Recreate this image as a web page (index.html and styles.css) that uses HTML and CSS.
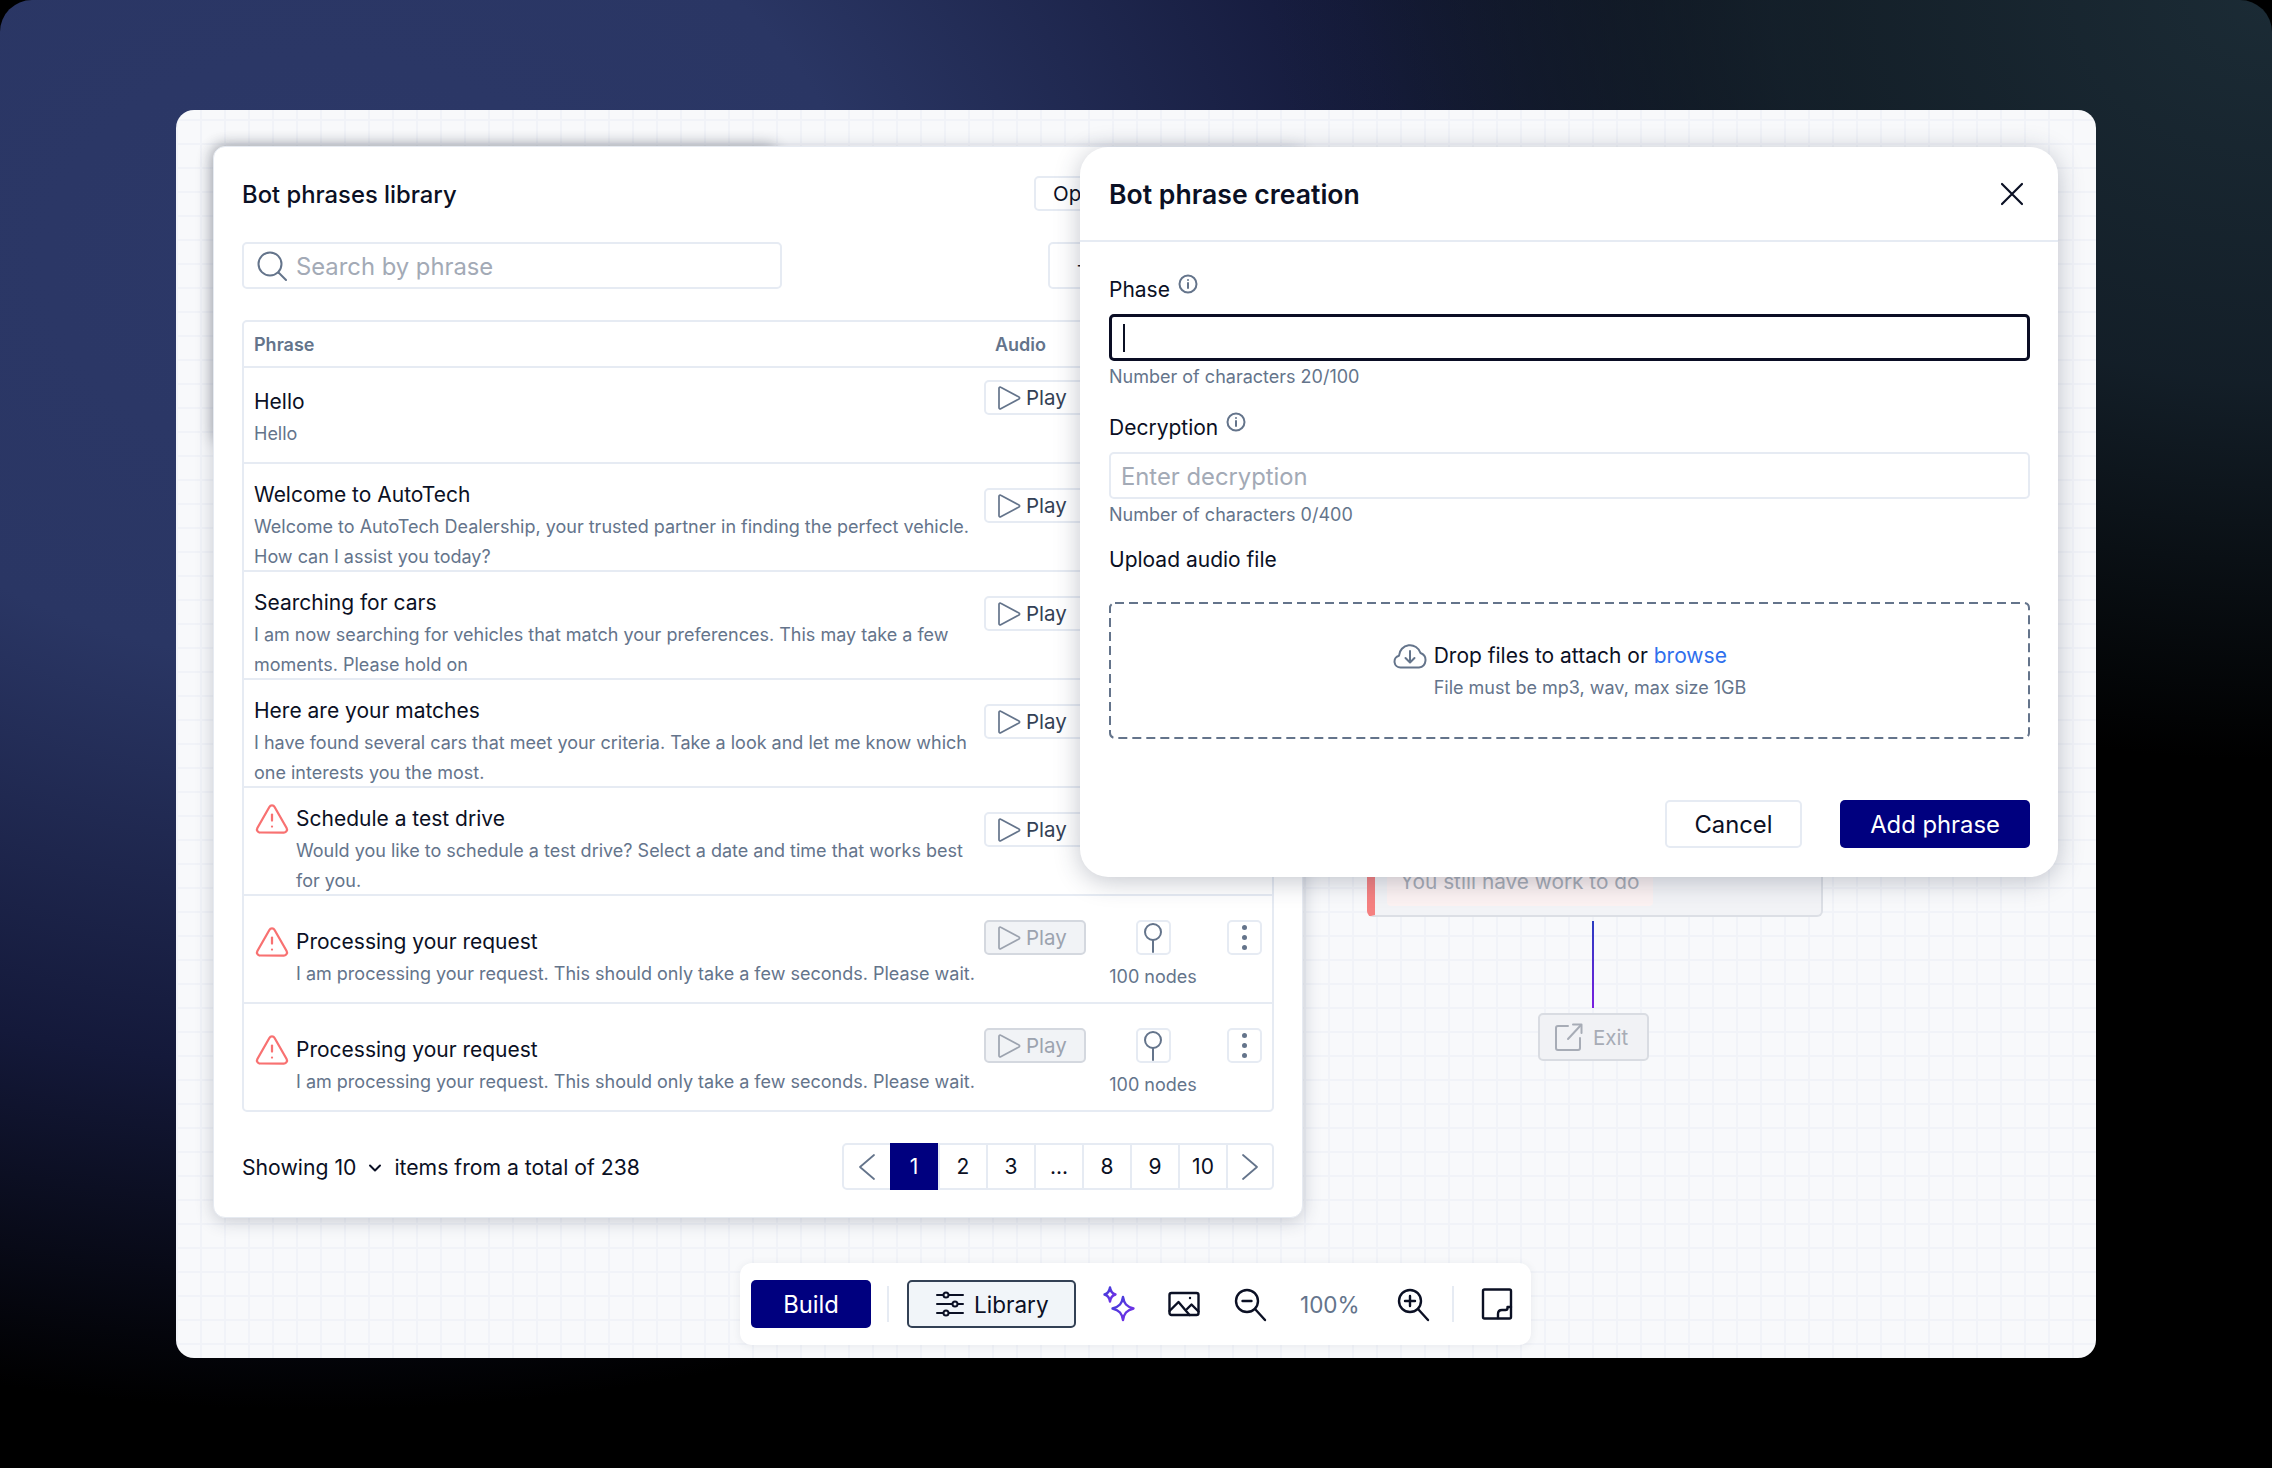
FILE: index.html
```html
<!DOCTYPE html>
<html>
<head>
<title>Bot phrases library</title>
<link rel="stylesheet" href="styles.css">
</head>
<body>
<svg class="sprite" width="0" height="0">
  <defs>
    <symbol id="ic-play" viewBox="0 0 26 26"><path d="M3 3.2v19.6c0 .9 1 1.4 1.700 1L23 14c.8-.4.8-1.600 0-2L4.700 2.200C4 1.800 3 2.300 3 3.200z"/></symbol>
    <symbol id="ic-warn" viewBox="0 0 24 24"><path d="m21.730 18-8-14a2 2 0 0 0-3.480 0l-8 14A2 2 0 0 0 4 21h16a2 2 0 0 0 1.730-3"/><path d="M12 9v4"/><path d="M12 17h.01"/></symbol>
    <symbol id="ic-pin" viewBox="0 0 24 32"><circle cx="12" cy="10" r="8"/><path d="M12 18v12"/></symbol>
    <symbol id="ic-info" viewBox="0 0 20 20"><circle cx="10" cy="10" r="8.500"/><path d="M10 9v5"/><path d="M10 6h.01"/></symbol>
    <linearGradient id="spark" x1="0" y1="0" x2="1" y2="1"><stop offset="0" stop-color="#3b3fd8"/><stop offset="1" stop-color="#7c2ee8"/></linearGradient>
  </defs>
</svg>

<div class="backdrop">
  <div class="canvas">

    <!-- diagram nodes behind the windows -->
    <div class="node-card"><div class="node-note">You still have work to do</div></div>
    <div class="node-line"></div>
    <div class="node-exit">
      <svg class="icon" width="30" height="30" viewBox="0 0 30 30"><path d="M14 4H4a2 2 0 0 0-2 2v20a2 2 0 0 0 2 2h20a2 2 0 0 0 2-2V16"/><path d="M14 17 27 3"/><path d="M19 2.500h8.500V11"/></svg>
      <span>Exit</span>
    </div>

    <div class="panel-shade"></div>
    <section class="panel">
      <div class="panel-head">
        <h2 class="panel-title">Bot phrases library</h2>
        <button class="btn-open">Open</button>
      </div>
      <div class="panel-tools">
        <label class="search">
          <svg class="icon" width="30" height="30" viewBox="0 0 30 30"><circle cx="13" cy="13" r="11.500"/><path d="m21.500 21.500 7.500 7.500"/></svg>
          <input type="text" placeholder="Search by phrase">
        </label>
        <button class="btn-add">+ Add</button>
      </div>

      <div class="table">
        <div class="table-head">
          <span class="col-phrase">Phrase</span>
          <span class="col-audio">Audio</span>
        </div>

        <div class="row row-first">
          <div class="phrase">
            <div class="phrase-title">Hello</div>
            <div class="phrase-text">Hello</div>
          </div>
          <button class="btn-play"><svg class="icon" width="26" height="26"><use href="#ic-play"/></svg>Play</button>
        </div>

        <div class="row">
          <div class="phrase">
            <div class="phrase-title">Welcome to AutoTech</div>
            <div class="phrase-text">Welcome to AutoTech Dealership, your trusted partner in finding the perfect vehicle. How can I assist you today?</div>
          </div>
          <button class="btn-play"><svg class="icon" width="26" height="26"><use href="#ic-play"/></svg>Play</button>
        </div>

        <div class="row">
          <div class="phrase">
            <div class="phrase-title">Searching for cars</div>
            <div class="phrase-text">I am now searching for vehicles that match your preferences. This may take a few moments. Please hold on</div>
          </div>
          <button class="btn-play"><svg class="icon" width="26" height="26"><use href="#ic-play"/></svg>Play</button>
        </div>

        <div class="row">
          <div class="phrase">
            <div class="phrase-title">Here are your matches</div>
            <div class="phrase-text">I have found several cars that meet your criteria. Take a look and let me know which one interests you the most.</div>
          </div>
          <button class="btn-play"><svg class="icon" width="26" height="26"><use href="#ic-play"/></svg>Play</button>
        </div>

        <div class="row">
          <div class="phrase phrase-warn">
            <svg class="icon warn" width="36" height="36"><use href="#ic-warn"/></svg>
            <div>
              <div class="phrase-title">Schedule a test drive</div>
              <div class="phrase-text">Would you like to schedule a test drive? Select a date and time that works best for you.</div>
            </div>
          </div>
          <button class="btn-play"><svg class="icon" width="26" height="26"><use href="#ic-play"/></svg>Play</button>
        </div>

        <div class="row row-mid">
          <div class="phrase phrase-warn">
            <svg class="icon warn" width="36" height="36"><use href="#ic-warn"/></svg>
            <div>
              <div class="phrase-title">Processing your request</div>
              <div class="phrase-text">I am processing your request. This should only take a few seconds. Please wait.</div>
            </div>
          </div>
          <button class="btn-play is-off"><svg class="icon" width="26" height="26"><use href="#ic-play"/></svg>Play</button>
          <div class="nodes">
            <button class="btn-square"><svg class="icon" width="24" height="32"><use href="#ic-pin"/></svg></button>
            <span>100 nodes</span>
          </div>
          <button class="btn-square btn-more"><i></i><i></i><i></i></button>
        </div>

        <div class="row row-mid">
          <div class="phrase phrase-warn">
            <svg class="icon warn" width="36" height="36"><use href="#ic-warn"/></svg>
            <div>
              <div class="phrase-title">Processing your request</div>
              <div class="phrase-text">I am processing your request. This should only take a few seconds. Please wait.</div>
            </div>
          </div>
          <button class="btn-play is-off"><svg class="icon" width="26" height="26"><use href="#ic-play"/></svg>Play</button>
          <div class="nodes">
            <button class="btn-square"><svg class="icon" width="24" height="32"><use href="#ic-pin"/></svg></button>
            <span>100 nodes</span>
          </div>
          <button class="btn-square btn-more"><i></i><i></i><i></i></button>
        </div>
      </div>

      <div class="panel-foot">
        <div class="showing">
          <span>Showing 10</span>
          <svg class="icon caret" width="14" height="10" viewBox="0 0 14 10"><path d="m2 2.500 5 5 5-5"/></svg>
          <span>items from a total of 238</span>
        </div>
        <div class="pager">
          <a class="page-prev"><svg class="icon" width="18" height="28" viewBox="0 0 18 28"><path d="M16 2 2 14l14 12"/></svg></a>
          <a class="is-active">1</a><a>2</a><a>3</a><a>...</a><a>8</a><a>9</a><a>10</a>
          <a class="page-next"><svg class="icon" width="18" height="28" viewBox="0 0 18 28"><path d="m2 2 14 12L2 26"/></svg></a>
        </div>
      </div>
    </section>

    <section class="modal">
      <div class="modal-head">
        <h2 class="modal-title">Bot phrase creation</h2>
        <svg class="icon close" width="24" height="24" viewBox="0 0 24 24"><path d="M2 2l20 20M22 2 2 22"/></svg>
      </div>
      <div class="modal-body">
        <div class="field-label">Phase <svg class="icon info" width="20" height="20"><use href="#ic-info"/></svg></div>
        <div class="text-input is-focus"><span class="cursor"></span></div>
        <div class="field-help">Number of characters 20/100</div>

        <div class="field-label field-gap">Decryption <svg class="icon info" width="20" height="20"><use href="#ic-info"/></svg></div>
        <input class="text-input" type="text" placeholder="Enter decryption">
        <div class="field-help">Number of characters 0/400</div>

        <div class="field-label upload-label">Upload audio file</div>
        <div class="dropzone">
          <svg class="icon drop-icon" width="34" height="28" viewBox="0 0 34 28"><path d="M9 26.500H7.500A6 6 0 0 1 6 14.700 11 11 0 0 1 27.500 12 7.500 7.500 0 0 1 26 26.500z"/><path d="M17 10v11"/><path d="m12.500 17 4.500 4.500 4.500-4.500"/></svg>
          <div>
            <div class="drop-main">Drop files to attach or <a>browse</a></div>
            <div class="drop-sub">File must be mp3, wav, max size 1GB</div>
          </div>
        </div>
        <div class="modal-actions">
          <button class="btn-cancel">Cancel</button>
          <button class="btn-primary btn-addphrase">Add phrase</button>
        </div>
      </div>
    </section>

    <div class="toolbar">
      <button class="btn-primary btn-build">Build</button>
      <span class="tool-sep sep-a"></span>
      <button class="btn-library">
        <svg class="icon" width="28" height="26" viewBox="0 0 28 26"><path d="M1 4h6M13 4h14M1 13h15M22 13h5M1 22h6M13 22h14"/><circle cx="10" cy="4" r="2.500"/><circle cx="19" cy="13" r="2.500"/><circle cx="10" cy="22" r="2.500"/></svg>
        Library
      </button>
      <svg class="tool tool-spark" width="36" height="36" viewBox="0 0 36 36" fill="none" stroke="url(#spark)" stroke-width="2.400" stroke-linejoin="round"><path d="M9 1.500c.6 4 2 6 5.500 7-3.500 1-4.900 3-5.500 7-.6-4-2-6-5.500-7 3.500-1 4.900-3 5.500-7z"/><path d="M22 11c1 6.500 3.500 9.500 10.500 11.500-7 2-9.500 5-10.500 11.500-1-6.500-3.500-9.500-10.500-11.500 7-2 9.500-5 10.500-11.500z"/></svg>
      <svg class="icon tool tool-image" width="36" height="36" viewBox="0 0 36 36"><rect x="3.500" y="7" width="29" height="22" rx="2"/><path d="m3.500 25 9-9 11 13"/><path d="m21 23 4.500-4.500 7 7"/><path d="M24 12h.01"/></svg>
      <svg class="icon tool tool-out" width="36" height="36" viewBox="0 0 36 36"><circle cx="15" cy="15" r="11"/><path d="m23 23 10 11"/><path d="M10.500 15h9"/></svg>
      <span class="zoom-value">100%</span>
      <svg class="icon tool tool-in" width="36" height="36" viewBox="0 0 36 36"><circle cx="15" cy="15" r="11"/><path d="m23 23 10 11"/><path d="M10 15h10M15 10v10"/></svg>
      <span class="tool-sep sep-b"></span>
      <svg class="icon tool tool-note" width="36" height="36" viewBox="0 0 36 36"><rect x="4" y="3.500" width="28" height="29" rx="1.500"/><path d="M19 32v-4c0-2.500 1.500-4 4-4h3.500c1.500 0 2-.7 2-2v-1h3.500"/></svg>
    </div>

  </div>
</div>
</body>
</html>
```

FILE: styles.css
```css
* {
  box-sizing: border-box;
}

html, body {
  margin: 0;
  height: 100%;
  background: #000;
}

body {
  font-family: "Inter", "Liberation Sans", sans-serif;
  color: #0b1024;
  overflow: hidden;
}

button, input {
  font: inherit;
  color: inherit;
}

.sprite {
  position: absolute;
}

.icon {
  fill: none;
  stroke: #64748b;
  stroke-width: 2;
  stroke-linecap: round;
  stroke-linejoin: round;
  flex: none;
  display: block;
}

.backdrop {
  width: 2272px;
  height: 1468px;
  padding: 110px 176px 110px;
  border-radius: 32px;
  background:
    radial-gradient(ellipse 1000px 760px at 2272px 0, #1b2b35 0%, rgba(24, 38, 50, .8) 50%, rgba(20, 30, 44, 0) 100%),
    radial-gradient(ellipse 1550px 1150px at 320px 260px, #2c3868 0%, #2a3664 35%, #14193a 70%, rgba(6, 6, 20, 0) 100%),
    #000;
}

.canvas {
  position: relative;
  height: 1248px;
  border-radius: 18px;
  overflow: hidden;
  background-color: #f8f9fb;
  background-image:
    linear-gradient(#f1f3f8 2px, transparent 2px),
    linear-gradient(90deg, #f1f3f8 2px, transparent 2px);
  background-size: 24px 24px;
  background-position: 0 9px;
}

/* diagram behind */
.node-card {
  position: absolute;
  left: 1191px;
  top: 640px;
  width: 456px;
  height: 167px;
  padding: 107px 0 0 12px;
  background: #f2f3f6;
  border: 2px solid #dcdfe5;
  border-left: 8px solid #f58080;
  border-radius: 6px;
}

.node-note {
  width: 266px;
  height: 47px;
  padding: 10px 0 0 13px;
  font-size: 20.800px;
  line-height: 26px;
  color: #a7acb6;
  background: #fcf2f2;
  border-radius: 4px;
}

.node-line {
  position: absolute;
  left: 1416px;
  top: 811px;
  width: 2px;
  height: 87px;
  background: linear-gradient(#2a3cc0, #7a1fe0);
}

.node-exit {
  position: absolute;
  left: 1362px;
  top: 903px;
  width: 111px;
  height: 48px;
  display: flex;
  align-items: center;
  gap: 9px;
  padding-left: 14px;
  font-size: 20.500px;
  color: #a7acb6;
  background: #f1f2f5;
  border: 2px solid #d9dce2;
  border-radius: 5px;
}

.node-exit .icon {
  stroke: #a7acb6;
}

/* library window */
.panel-shade {
  position: absolute;
  left: 38px;
  top: 38px;
  width: 566px;
  height: 300px;
  border-radius: 12px;
  box-shadow: -2px -4px 14px rgba(30, 35, 50, .3);
}

.panel {
  position: absolute;
  left: 37px;
  top: 36px;
  width: 1090px;
  height: 1072px;
  padding: 29px 28px 0;
  background: #fff;
  border: 1px solid #e6eaf1;
  border-radius: 12px;
  box-shadow: 0 3px 18px rgba(40, 50, 75, .24);
}

.panel-head {
  display: flex;
  justify-content: space-between;
  height: 35px;
  margin-bottom: 31px;
}

.panel-title {
  margin: 0;
  font-size: 23.800px;
  font-weight: 500;
  line-height: 38px;
}

.btn-open {
  width: 120px;
  height: 35px;
  margin-right: 120px;
  padding: 0 0 0 17px;
  text-align: left;
  font-size: 20.500px;
  background: #fff;
  border: 2px solid #e6ebf3;
  border-radius: 5px;
}

.panel-tools {
  display: flex;
  justify-content: space-between;
  height: 47px;
  margin-bottom: 31px;
}

.search {
  width: 540px;
  height: 47px;
  display: flex;
  align-items: center;
  gap: 9px;
  padding-left: 13px;
  border: 2px solid #e6ebf3;
  border-radius: 5px;
}

.search input {
  flex: 1;
  min-width: 0;
  border: 0;
  outline: 0;
  padding: 2px 0 0;
  font-size: 23.800px;
  background: transparent;
}

.search input::placeholder, .text-input::placeholder {
  color: #a3aab6;
  opacity: 1;
}

.btn-add {
  width: 140px;
  height: 47px;
  margin-right: 86px;
  padding: 0 0 0 26px;
  text-align: left;
  font-size: 20px;
  background: #fff;
  border: 2px solid #e6ebf3;
  border-radius: 5px;
}

/* table */
.table {
  border: 2px solid #e6ebf3;
  border-radius: 5px;
}

.table-head {
  height: 44px;
  display: flex;
  align-items: center;
  padding-left: 10px;
  font-size: 18px;
  font-weight: 600;
  color: #64748b;
}

.col-phrase {
  width: 741px;
}

.row {
  display: grid;
  grid-template-columns: 730px 102px 134px 35px;
  height: 108px;
  padding: 0 0 0 10px;
  border-top: 2px solid #e6ebf3;
  align-items: start;
}

.row-first {
  height: 96px;
}

.phrase {
  padding-top: 17px;
  padding-right: 4px;
}

.row-first .phrase {
  padding-top: 20px;
}

.row-mid .phrase {
  padding-top: 32px;
}

.phrase-warn {
  display: flex;
  gap: 6px;
}

.warn {
  margin-top: -4px;
  stroke: #f87171;
  stroke-width: 1.500;
}

.phrase-title {
  font-size: 21px;
  line-height: 28px;
  margin-bottom: 3px;
}

.phrase-text {
  font-size: 18px;
  line-height: 30px;
  color: #64748b;
}

.btn-play {
  width: 102px;
  height: 35px;
  margin-top: 24px;
  display: flex;
  align-items: center;
  gap: 4px;
  padding: 0 0 0 10px;
  font-size: 20.500px;
  color: #334155;
  background: #fff;
  border: 2px solid #e6ebf3;
  border-radius: 5px;
}

.row-first .btn-play {
  margin-top: 12px;
}

.btn-play .icon {
  stroke-width: 1.700;
}

.btn-play.is-off {
  color: #9ca3af;
  background: #f1f3f6;
  border-color: #d4d8df;
}

.btn-play.is-off .icon {
  stroke: #9ca3af;
}

.btn-square {
  width: 35px;
  height: 35px;
  padding: 0;
  display: flex;
  align-items: center;
  justify-content: center;
  background: #fff;
  border: 2px solid #e6ebf3;
  border-radius: 5px;
}

.nodes {
  margin-top: 24px;
  display: flex;
  flex-direction: column;
  align-items: center;
  gap: 7px;
  font-size: 18px;
  line-height: 30px;
  color: #64748b;
}

.btn-more {
  margin-top: 24px;
  margin-left: 7px;
  flex-direction: column;
  gap: 5px;
}

.btn-more i {
  width: 5px;
  height: 5px;
  border-radius: 50%;
  background: #64748b;
}

/* footer */
.panel-foot {
  display: flex;
  justify-content: space-between;
  align-items: center;
  margin-top: 31px;
  font-size: 21px;
}

.showing {
  display: flex;
  align-items: center;
  font-size: 21.200px;
}

.caret {
  margin: 2px 12px 0 12px;
  stroke: #0b1024;
}

.pager {
  display: grid;
  grid-template-columns: 46px repeat(7, 1fr) 46px;
  width: 432px;
  height: 47px;
  border: 2px solid #e6ebf3;
  border-radius: 5px;
}

.pager a {
  display: flex;
  align-items: center;
  justify-content: center;
  border-left: 2px solid #e6ebf3;
}

.pager a:first-child {
  border-left: 0;
}

.pager .is-active {
  margin: -2px 0;
  color: #fff;
  background: #00007f;
  border-left: 0;
}

.pager .icon {
  stroke-width: 1.800;
}

/* creation modal */
.modal {
  position: absolute;
  left: 904px;
  top: 37px;
  width: 978px;
  height: 730px;
  background: #fff;
  border-radius: 28px;
  box-shadow: 0 4px 26px rgba(40, 50, 75, .28);
}

.modal-head {
  height: 95px;
  display: flex;
  justify-content: space-between;
  align-items: center;
  padding: 0 34px 0 29px;
  border-bottom: 2px solid #e6ebf3;
}

.modal-title {
  margin: 0;
  font-size: 26.600px;
  font-weight: 600;
}

.close {
  stroke: #0b1024;
  stroke-width: 2.200;
}

.modal-body {
  padding: 34px 28px 0 29px;
}

.field-label {
  display: flex;
  gap: 8px;
  height: 28px;
  margin-bottom: 10px;
  font-size: 21px;
  line-height: 28px;
}

.field-gap {
  margin-top: 25px;
}

.info {
  margin-top: -2px;
}

.text-input {
  display: block;
  width: 921px;
  height: 47px;
  padding: 2px 10px 0;
  font-size: 23.800px;
  background: #fff;
  border: 2px solid #e6ebf3;
  border-radius: 5px;
  outline: 0;
}

.text-input.is-focus {
  border: 3px solid #0a0d24;
  padding: 7px 11px 0;
}

.cursor {
  display: block;
  width: 2px;
  height: 28px;
  background: #0b1024;
}

.field-help {
  margin-top: 4px;
  font-size: 18px;
  line-height: 24px;
  color: #64748b;
}

.upload-label {
  margin-top: 19px;
  margin-bottom: 28px;
}

.dropzone {
  width: 921px;
  height: 137px;
  display: flex;
  justify-content: center;
  align-items: center;
  gap: 7px;
  background: url("data:image/svg+xml,%3Csvg xmlns='http://www.w3.org/2000/svg' width='921' height='137'%3E%3Crect x='1' y='1' width='919' height='135' rx='5' fill='none' stroke='%2364748b' stroke-width='2' stroke-dasharray='9 5'/%3E%3C/svg%3E");
}

.drop-icon {
  margin-top: -32px;
}

.drop-main {
  font-size: 21px;
  line-height: 28px;
  padding-top: 1px;
  margin-bottom: 5px;
}

.drop-main a {
  color: #2f6fed;
}

.drop-sub {
  font-size: 18px;
  line-height: 26px;
  color: #64748b;
}

.modal-actions {
  display: flex;
  justify-content: flex-end;
  gap: 38px;
  margin-top: 61px;
}

.btn-cancel {
  width: 137px;
  height: 48px;
  font-size: 23.800px;
  background: #fff;
  border: 2px solid #e6ebf3;
  border-radius: 5px;
}

.btn-primary {
  height: 48px;
  color: #fff;
  font-size: 23.800px;
  background: #00007f;
  border: 0;
  border-radius: 5px;
}

.btn-addphrase {
  width: 190px;
}

/* bottom toolbar */
.toolbar {
  position: absolute;
  left: 564px;
  top: 1153px;
  width: 791px;
  height: 82px;
  display: flex;
  align-items: center;
  padding-left: 11px;
  background: #fff;
  border-radius: 12px;
  box-shadow: 0 1px 8px rgba(40, 50, 75, .08);
}

.btn-build {
  width: 120px;
}

.tool-sep {
  width: 2px;
  height: 36px;
  background: #e6ebf3;
}

.sep-a {
  margin: 0 18px 0 16px;
}

.btn-library {
  width: 169px;
  height: 48px;
  display: flex;
  align-items: center;
  gap: 10px;
  padding: 0 0 0 27px;
  font-size: 22.500px;
  background: #f1f5f9;
  border: 2px solid #334155;
  border-radius: 5px;
}

.btn-library .icon {
  stroke: #0b1024;
}

.tool {
  flex: none;
}

.toolbar .icon.tool {
  stroke: #0b1024;
  stroke-width: 2.400;
}

.tool-spark {
  margin-left: 25px;
}

.tool-image {
  margin-left: 29px;
}

.tool-out {
  margin-left: 30px;
}

.zoom-value {
  width: 56px;
  margin-left: 32px;
  font-size: 22.500px;
  color: #64748b;
  text-align: center;
}

.tool-in {
  margin-left: 39px;
}

.sep-b {
  margin: 0 25px 0 21px;
}
```
